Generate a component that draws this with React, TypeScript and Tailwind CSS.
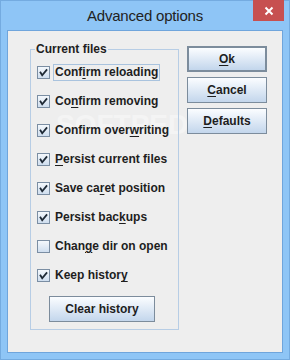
import React from "react";

const font = { fontFamily: '"Liberation Sans", Arial, sans-serif' };

function Check({ checked }: { checked: boolean }) {
  return (
    <div className="w-[13px] h-[13px] shrink-0 border border-[#7b8ea3] bg-gradient-to-b from-[#f4f8fc] to-[#cfdeef] flex items-center justify-center">
      {checked && (
        <svg width="11" height="11" viewBox="0 0 11 11">
          <polyline points="2.5,5.5 4.2,8.2 8.5,3" fill="none" stroke="#1f2a36" strokeWidth="1.8" strokeLinecap="square" />
        </svg>
      )}
    </div>
  );
}

function Row({ checked, children, focus }: { checked: boolean; children: React.ReactNode; focus?: boolean }) {
  return (
    <div className="h-[29px] flex items-center">
      <Check checked={checked} />
      <span
        className={
          "ml-[3px] text-[12px] font-bold text-[#1e1e1e] leading-[13px] px-[1px] py-[1px] border " +
          (focus ? "border-[#a9c3de]" : "border-transparent")
        }
      >
        {children}
      </span>
    </div>
  );
}

function Btn({ children, def }: { children: React.ReactNode; def?: boolean }) {
  return (
    <div
      className={
        "w-[80px] h-[26px] flex items-center justify-center text-[12px] font-bold text-[#1e1e1e] bg-gradient-to-b from-[#fbfdff] to-[#c3d6ec] " +
        (def ? "border-2 border-[#7c8c9c]" : "border border-[#7c8c9c]")
      }
    >
      {children}
    </div>
  );
}

const U = ({ children }: { children: React.ReactNode }) => <span className="underline underline-offset-[2px]">{children}</span>;

export default function App() {
  return (
    <div className="w-[290px] h-[360px] bg-[#8ec5f6] border border-[#74abe0] flex flex-col" style={font}>
      <div className="h-[29px] shrink-0 flex relative">
        <div className="flex-1 flex items-center justify-center pt-[1px]">
          <span className="text-[15px] text-[#222] tracking-[-0.2px]">Advanced options</span>
        </div>
        <div className="absolute right-[5px] -top-[1px] w-[31px] h-[21px] bg-[#c75050] flex items-center justify-center">
          <svg width="10" height="10" viewBox="0 0 10 10">
            <path d="M1.5 1.5 L8.5 8.5 M8.5 1.5 L1.5 8.5" stroke="#fff" strokeWidth="2" />
          </svg>
        </div>
      </div>
      <div className="mx-[6px] mb-[6px] flex-1 border border-[#6fa5dc] bg-[#eeeeee] flex pl-[22px] pt-[15px] relative">
        <div className="absolute left-[48px] top-[73px] text-[28px] font-bold text-white/40 pointer-events-none select-none">
          SOFTPEDIA
        </div>
        <div className="mt-[3px] w-[149px] h-[281px] border border-[#b7cde5] relative pl-[6px] pt-[8px] pb-[6px]">
          <div className="absolute -top-[8px] left-[4px] px-[1px] bg-[#eeeeee] text-[12px] font-bold text-[#1e1e1e] leading-[14px]">
            Current files
          </div>
          <Row checked focus>Conf<U>i</U>rm reloading</Row>
          <Row checked>Co<U>n</U>firm removing</Row>
          <Row checked>Confirm over<U>w</U>riting</Row>
          <Row checked><U>P</U>ersist current files</Row>
          <Row checked>Save ca<U>r</U>et position</Row>
          <Row checked>Persist bac<U>k</U>ups</Row>
          <Row checked={false}>Chan<U>g</U>e dir on open</Row>
          <Row checked>Keep histor<U>y</U></Row>
          <div className="ml-[12px] mt-[6px] w-[106px] h-[26px] flex items-center justify-center text-[12px] font-bold text-[#1e1e1e] bg-gradient-to-b from-[#fbfdff] to-[#c3d6ec] border border-[#7c8c9c]">
            Clear history
          </div>
        </div>
        <div className="ml-[8px] flex flex-col gap-[5px] relative">
          <Btn def><U>O</U>k</Btn>
          <Btn><U>C</U>ancel</Btn>
          <Btn><U>D</U>efaults</Btn>
        </div>
      </div>
    </div>
  );
}
